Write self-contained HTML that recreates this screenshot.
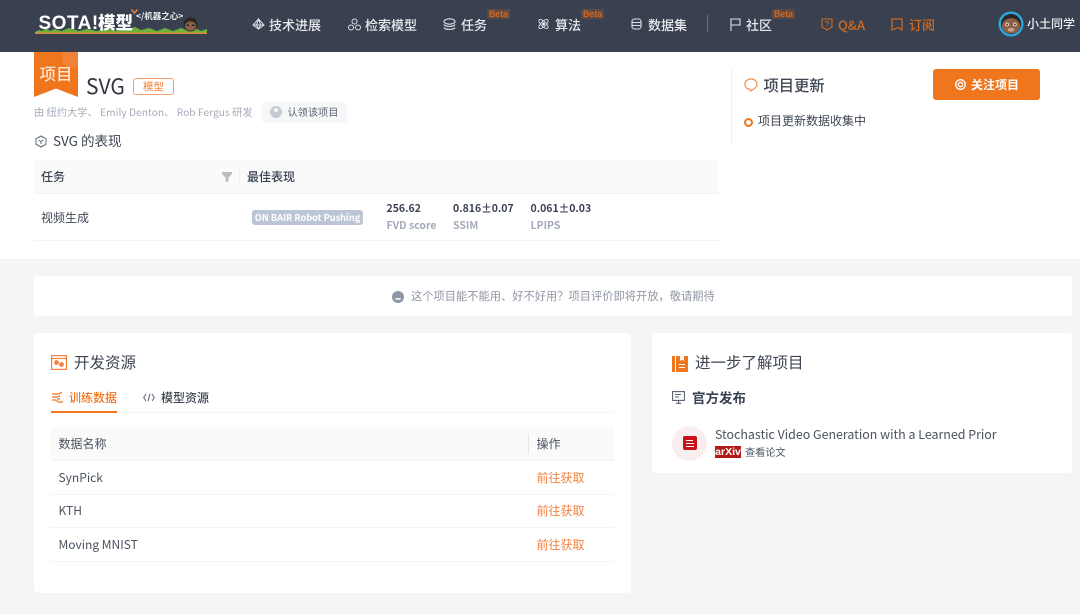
<!DOCTYPE html>
<html lang="zh"><head><meta charset="utf-8"><title>SVG</title>
<style>
*{box-sizing:border-box}
html,body{margin:0;padding:0;background:#f4f5f7}
body{width:1080px;height:614px;position:relative;overflow:hidden;font-family:"Noto Sans CJK SC","Liberation Sans",sans-serif;color:#3a4252}
#w{position:absolute;left:0;top:0;width:1080px;height:614px;filter:blur(.3px)}
.t{position:absolute;white-space:nowrap;line-height:1}
.a{position:absolute}
svg{position:absolute;overflow:visible}
.nav{color:#e8eaee;font-size:13px;font-weight:500;top:18px}
.beta{position:absolute;width:23px;height:10px;background:#5d4a40;border-radius:2px;color:#d5651f;font:bold 8.800px/10px "Liberation Sans",sans-serif;text-align:center}
.ln{position:absolute;height:1px;background:#f3f4f6}
.or{color:#f4823f}
.g{color:#a4abb8}
.m{font-size:10.500px;font-weight:700}
</style></head><body><div id="w">

<div class="a" style="left:0;top:0;width:1080px;height:52px;background:#394150"></div>
<div class="a" style="left:0;top:52px;width:1080px;height:208px;background:#fff;border-bottom:1px solid #eef0f2"></div>

<!-- logo -->
<svg style="left:35px;top:26px" width="172" height="8"><path d="M0 6L4 4 7 5 11 2 15 5 20 3 26 5 34 2 44 5 52 3 62 5 70 2 82 5 92 3 100 1 106 4 114 2 122 5 130 2 138 5 146 2 154 5 160 2 166 5 172 3V7H0Z" fill="#6fb03a"/><rect y="6.500" width="172" height="1.500" fill="#d98a3c"/></svg>
<div class="t" style="left:38.500px;top:14px;color:#fff;font:bold 19px/19px 'Liberation Sans',sans-serif;letter-spacing:.5px">SOTA!</div>
<div class="t" style="left:98px;top:14px;color:#fff;font:900 17.500px/17.500px 'Noto Sans CJK SC',sans-serif">模型</div>
<div class="t" style="left:136px;top:12px;color:#eceef0;font-size:8.500px;font-weight:700">&lt;/机器之心&gt;</div>
<svg style="left:131px;top:9px" width="7" height="5"><path d="M.5 .5L3.500 4 6.500 .5" stroke="#e8863a" fill="none" stroke-width="1.500"/></svg>
<svg style="left:183px;top:17px" width="15" height="15"><circle cx="7.500" cy="7.500" r="7" fill="#2a2624"/><ellipse cx="7.500" cy="9" rx="5.500" ry="4.800" fill="#8a6048"/><rect x="3.500" y="7.500" width="2.500" height="1.500" fill="#2a2624"/><rect x="9" y="7.500" width="2.500" height="1.500" fill="#2a2624"/></svg>

<!-- nav -->
<svg style="left:252px;top:18px" width="13" height="12" fill="none" stroke="#dfe2e6" stroke-width="1"><path d="M6.500 1L12 7 6.500 11 1 7ZM1 7H12M6.500 1L4.500 7 6.500 11 8.500 7Z"/></svg>
<div class="t nav" style="left:269px">技术进展</div>
<svg style="left:348px;top:18px" width="13" height="13" fill="none" stroke="#dfe2e6" stroke-width="1"><circle cx="6.500" cy="3.500" r="2.500"/><circle cx="3" cy="9.500" r="2.500"/><circle cx="10" cy="9.500" r="2.500"/></svg>
<div class="t nav" style="left:365px">检索模型</div>
<svg style="left:443px;top:18px" width="13" height="13" fill="none" stroke="#dfe2e6" stroke-width="1.100"><ellipse cx="6.500" cy="3.500" rx="5.500" ry="2.700"/><path d="M1 6.500C2 9 11 9 12 6.500M1 9.500C2 12 11 12 12 9.500"/></svg>
<div class="t nav" style="left:461px">任务</div>
<div class="beta" style="left:487px;top:8.500px">Beta</div>
<svg style="left:537px;top:17px" width="13" height="14" fill="none" stroke="#dfe2e6" stroke-width=".9"><ellipse cx="6.500" cy="7" rx="6" ry="2.500" transform="rotate(45 6.500 7)"/><ellipse cx="6.500" cy="7" rx="6" ry="2.500" transform="rotate(-45 6.500 7)"/><circle cx="6.500" cy="7" r="1.200" fill="#dfe2e6"/></svg>
<div class="t nav" style="left:555px">算法</div>
<div class="beta" style="left:581px;top:8.500px">Beta</div>
<svg style="left:631px;top:18px" width="11" height="12" fill="none" stroke="#dfe2e6" stroke-width="1.100"><rect x="1" y="1" width="9" height="10" rx="2.500"/><path d="M1 4.500H10M1 7.500H10"/></svg>
<div class="t nav" style="left:648px">数据集</div>
<div class="a" style="left:707px;top:15px;width:1px;height:17px;background:#6a7280"></div>
<svg style="left:730px;top:18px" width="11" height="13" fill="none" stroke="#dfe2e6" stroke-width="1.100"><path d="M1 13V1H10V7H1"/></svg>
<div class="t nav" style="left:746px">社区</div>
<div class="beta" style="left:772px;top:8.500px">Beta</div>
<svg style="left:821px;top:18px" width="12" height="13" fill="none" stroke="#d5691f" stroke-width="1.100"><path d="M1 1H11V9L6 12 1 9Z"/><path d="M4.500 4.500C4.500 3 7.500 3 7.500 4.500 7.500 5.700 6 5.500 6 6.800M6 7.800V8.800" stroke-width=".9"/></svg>
<div class="t nav" style="left:838px;color:#d5691f">Q&amp;A</div>
<svg style="left:891px;top:18px" width="12" height="13" fill="none" stroke="#d5691f" stroke-width="1.200"><path d="M1 1H11V12L7.500 9.500 1 12Z"/></svg>
<div class="t nav" style="left:909px;color:#d5691f">订阅</div>
<svg style="left:998px;top:11px" width="26" height="26" viewBox="0 0 27 27"><circle cx="13.500" cy="13.500" r="13" fill="#2aa8dc"/><circle cx="13.500" cy="13.500" r="10.500" fill="#2a2624"/><ellipse cx="13.500" cy="15.500" rx="9.500" ry="8" fill="#8a6048"/><circle cx="9.500" cy="14" r="2" fill="#e8d8d0"/><circle cx="17.500" cy="14" r="2" fill="#e8d8d0"/><circle cx="9.500" cy="14" r="1" fill="#7a1f22"/><circle cx="17.500" cy="14" r="1" fill="#7a1f22"/><ellipse cx="13.500" cy="19.500" rx="3.500" ry="2" fill="#c9a28c"/></svg>
<div class="t" style="left:1027px;top:18px;color:#eef0f2;font-size:12px;font-weight:500">小土同学</div>

<!-- project badge -->
<svg style="left:34px;top:52px" width="44" height="45"><defs><clipPath id="c"><path d="M0 0H44V45L22 36.500 0 45Z"/></clipPath></defs><path d="M0 0H44V45L22 36.500 0 45Z" fill="#f0761e"/><circle cx="38" cy="6" r="10" fill="#f4975a" opacity=".4" clip-path="url(#c)"/></svg>
<div class="t" style="left:39.500px;top:65px;color:#fde4d2;font-size:16.500px;font-weight:500">项目</div>
<div class="t" style="left:86px;top:76px;font-size:21px;color:#2f3541;line-height:21px">SVG</div>
<div class="a" style="left:133px;top:78px;width:41px;height:17px;border:1px solid #f4a06a;border-radius:3px;color:#f2803a;font-size:10.500px;line-height:15px;text-align:center">模型</div>
<div class="t g" style="left:34px;top:107px;font-size:10.250px">由 纽约大学、 Emily Denton、 Rob Fergus 研发</div>
<div class="a" style="left:262px;top:102px;width:85px;height:21px;background:#f6f7f9;border-radius:3px"></div>
<div class="a" style="left:270px;top:106px;width:12px;height:12px;border-radius:50%;background:#c5cad3"></div>
<div class="a" style="left:274px;top:108px;width:4px;height:4px;border-radius:50%;background:#f6f7f9"></div>
<div class="t" style="left:287.500px;top:107px;font-size:10.200px;color:#5c6470">认领该项目</div>

<svg style="left:35px;top:135px" width="12" height="13" fill="none" stroke="#5f6875" stroke-width="1"><path d="M6 1L11 3.700V9.300L6 12 1 9.300V3.700Z"/><path d="M3.500 5L6 6.500 8.500 5M6 6.500V9"/></svg>
<div class="t" style="left:53px;top:134px;font-size:13.500px;color:#3d4552">SVG 的表现</div>

<!-- table -->
<div class="a" style="left:34px;top:160px;width:685px;height:34px;background:#fafafa;border-bottom:1px solid #f1f2f4"></div>
<div class="a" style="left:239px;top:167px;width:1px;height:20px;background:#eeeff1"></div>
<div class="t" style="left:41px;top:170.500px;font-size:12px;font-weight:500;color:#3a4252">任务</div>
<svg style="left:222px;top:172px" width="10" height="10"><path d="M0 0H10V2L6.500 5.500V9.500H3.500V5.500L0 2Z" fill="#b9bcc1"/></svg>
<div class="t" style="left:247px;top:170.500px;font-size:12px;font-weight:500;color:#3a4252">最佳表现</div>
<div class="t" style="left:41px;top:211.500px;font-size:12px;color:#3f4754">视频生成</div>
<div class="a" style="left:252px;top:210px;width:111px;height:15px;background:#bcc5d6;border-radius:3px;color:#fff;font-size:9.200px;font-weight:700;line-height:14px;text-align:center;white-space:nowrap">ON BAIR Robot Pushing</div>
<div class="t m" style="left:386.500px;top:204px;color:#3a4252">256.62</div>
<div class="t g m" style="left:386.500px;top:220.500px">FVD score</div>
<div class="t m" style="left:453px;top:204px;color:#3a4252">0.816±0.07</div>
<div class="t g m" style="left:453px;top:220.500px">SSIM</div>
<div class="t m" style="left:530.500px;top:204px;color:#3a4252">0.061±0.03</div>
<div class="t g m" style="left:530.500px;top:220.500px">LPIPS</div>
<div class="ln" style="left:34px;top:240px;width:685px"></div>

<!-- right -->
<div class="a" style="left:731px;top:69px;width:1px;height:77px;background:#f0f1f3"></div>
<svg style="left:744px;top:78px" width="14" height="14" fill="none" stroke="#f4904f" stroke-width="1.200"><path d="M7 1C10.500 1 13 3.300 13 6.200 13 9.500 9.500 11.500 6.500 13 6.500 11.500 6 11.200 4.500 11 2.500 10.300 1 8.500 1 6.200 1 3.300 3.500 1 7 1Z"/></svg>
<div class="t" style="left:763.500px;top:78px;font-size:15.300px;font-weight:500;color:#3d4552">项目更新</div>
<div class="a" style="left:933px;top:69px;width:107px;height:31px;background:#f0761e;border-radius:3px"></div>
<svg style="left:955px;top:79px" width="11" height="11" fill="none" stroke="#fff" stroke-width="1.300"><circle cx="5.500" cy="5.500" r="4.800"/><circle cx="5.500" cy="5.500" r="2.200"/></svg>
<div class="t" style="left:971px;top:78.500px;color:#fff;font-size:12px;font-weight:700">关注项目</div>
<div class="a" style="left:744px;top:118px;width:9px;height:9px;border:2px solid #f0761e;border-radius:50%"></div>
<div class="t" style="left:758px;top:114.500px;font-size:12px;color:#3d4552">项目更新数据收集中</div>

<!-- notice -->
<div class="a" style="left:34px;top:276px;width:1038px;height:40px;background:#fff;border-radius:4px"></div>
<div class="a" style="left:392px;top:291px;width:12px;height:12px;border-radius:50%;background:#8d96a5"></div>
<div class="a" style="left:395px;top:298px;width:6px;height:2px;border-radius:0 0 3px 3px;background:#e4e6ea"></div>
<div class="t" style="left:411px;top:291px;font-size:11.250px;color:#8f96a3">这个项目能不能用、好不好用？项目评价即将开放，敬请期待</div>

<!-- left card -->
<div class="a" style="left:34px;top:333px;width:597px;height:260px;background:#fff;border-radius:4px"></div>
<svg style="left:51px;top:355px" width="16" height="15" fill="none" stroke="#f4823f" stroke-width="1.200"><rect x=".6" y=".6" width="14.800" height="13.800"/><path d="M1 3.500H15"/><circle cx="5.500" cy="7.500" r="1.800" fill="#f4823f"/><circle cx="10.500" cy="9.500" r="1.800" fill="#f4823f"/></svg>
<div class="t" style="left:74px;top:355px;font-size:15.500px;color:#3d4552">开发资源</div>
<svg style="left:51px;top:391px" width="13" height="13" fill="none" stroke="#f0761e" stroke-width="1.200"><path d="M1 3H8L11 1M1 6H6L9 5M1 9H4L8 11H12M6 8L9 8"/></svg>
<div class="t" style="left:69px;top:391.500px;font-size:12px;font-weight:500;color:#f0761e">训练数据</div>
<div class="a" style="left:51px;top:411px;width:66px;height:2px;background:#f0761e"></div>
<div class="ln" style="left:117px;top:412px;width:497px"></div>
<svg style="left:143px;top:393px" width="12" height="9" fill="none" stroke="#5a6270" stroke-width="1"><path d="M3 1L.7 4.500 3 8M9 1L11.300 4.500 9 8M7 .8L5 8.200"/></svg>
<div class="t" style="left:161px;top:391.500px;font-size:12px;font-weight:500;color:#3d4552">模型资源</div>

<div class="a" style="left:51px;top:427px;width:563px;height:34px;background:#fafafa;border-bottom:1px solid #f1f2f4"></div>
<div class="a" style="left:528px;top:434px;width:1px;height:20px;background:#e5e6e8"></div>
<div class="t" style="left:58.500px;top:437.500px;font-size:12px;color:#4b5260">数据名称</div>
<div class="t" style="left:536.500px;top:437.500px;font-size:12px;color:#4b5260">操作</div>
<div class="t" style="left:58.500px;top:471.500px;font-size:12px;color:#4b5260">SynPick</div>
<div class="t or" style="left:536.500px;top:471.500px;font-size:12px">前往获取</div>
<div class="ln" style="left:51px;top:494px;width:563px"></div>
<div class="t" style="left:58.500px;top:504.500px;font-size:12px;color:#4b5260">KTH</div>
<div class="t or" style="left:536.500px;top:504.500px;font-size:12px">前往获取</div>
<div class="ln" style="left:51px;top:527px;width:563px"></div>
<div class="t" style="left:58.500px;top:538.500px;font-size:12px;color:#4b5260">Moving MNIST</div>
<div class="t or" style="left:536.500px;top:538.500px;font-size:12px">前往获取</div>
<div class="ln" style="left:51px;top:561px;width:563px"></div>

<!-- right card -->
<div class="a" style="left:652px;top:333px;width:420px;height:140px;background:#fff;border-radius:4px"></div>
<svg style="left:672px;top:356px" width="16" height="16"><rect width="3" height="16" fill="#f0761e"/><path d="M4 0H16V16H4Z" fill="#f0761e"/><path d="M8 0H12V5L10 3.500 8 5ZM7 8H13V9H7ZM7 11H13V12H7Z" fill="#fff"/></svg>
<div class="t" style="left:695px;top:355px;font-size:15.500px;color:#3d4552">进一步了解项目</div>
<svg style="left:672px;top:391px" width="13" height="13" fill="none" stroke="#5a6270" stroke-width="1.100"><rect x=".6" y=".6" width="11.800" height="8.800"/><path d="M6.500 9.500V12M4 12.300H9M3 3.500H9M3 6H7"/></svg>
<div class="t" style="left:692px;top:391px;font-size:13.500px;font-weight:700;color:#3a4252">官方发布</div>
<div class="a" style="left:672px;top:426px;width:35px;height:35px;border-radius:50%;background:#f9eeee"></div>
<div class="a" style="left:683px;top:436px;width:14px;height:14px;border-radius:2px;background:#cc1018"></div>
<div class="a" style="left:686px;top:440px;width:7px;height:1px;background:#fff"></div>
<div class="a" style="left:686px;top:443px;width:8px;height:1px;background:#fff"></div>
<div class="a" style="left:686px;top:446px;width:8px;height:1px;background:#fff"></div>
<div class="t" style="left:715px;top:428px;font-size:12.420px;color:#4b5260">Stochastic Video Generation with a Learned Prior</div>
<div class="a" style="left:715px;top:446px;width:26px;height:12px;background:#b31b1b;color:#fff;font:bold 10.500px/12px 'Liberation Sans',sans-serif;text-align:center">arXiv</div>
<div class="t" style="left:745px;top:446.500px;font-size:10.200px;color:#4b5260">查看论文</div>

</div></body></html>
